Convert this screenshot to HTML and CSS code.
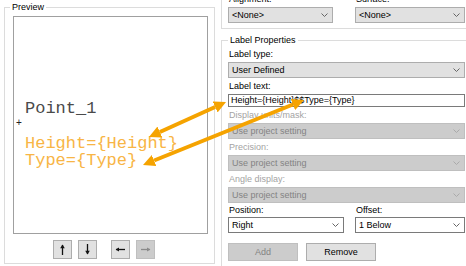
FILE: index.html
```html
<!DOCTYPE html>
<html lang="en">
<head>
    <meta charset="UTF-8">
    <title>Label Properties</title>
    <link rel="stylesheet" href="styles.css">
</head>
<body>
    <div class="page">
        <fieldset class="group preview">
            <legend>Preview</legend>
            <div class="canvas">
                <div class="label-name">Point_1</div>
                <div class="marker">+</div>
                <div class="label-text">Height={Height}</div>
                <div class="label-text">Type={Type}</div>
            </div>
            <div class="nudge">
                <button class="nudge-btn">
                    <svg width="17" height="17" viewBox="0 0 17 17"><path d="M8.5 4v10" stroke="#111" stroke-width="1.3"/><path d="M6.2 7.2L8.5 3.6l2.3 3.6z" fill="#111"/></svg>
                </button>
                <button class="nudge-btn">
                    <svg width="17" height="17" viewBox="0 0 17 17"><path d="M8.5 3v10" stroke="#111" stroke-width="1.3"/><path d="M6.2 9.8L8.5 13.4l2.3-3.6z" fill="#111"/></svg>
                </button>
                <button class="nudge-btn gap">
                    <svg width="17" height="17" viewBox="0 0 17 17"><path d="M4 8.5h9" stroke="#111" stroke-width="1.3"/><path d="M7 6.4L3.6 8.5 7 10.6z" fill="#111"/></svg>
                </button>
                <button class="nudge-btn" disabled>
                    <svg width="17" height="17" viewBox="0 0 17 17"><path d="M4 8.5h9" stroke="#8a8a8a" stroke-width="1.3"/><path d="M10 6.4l3.4 2.1L10 10.6z" fill="#8a8a8a"/></svg>
                </button>
            </div>
        </fieldset>

        <div class="side">
            <fieldset class="group placement">
                <div class="pair wide">
                    <div class="field">
                        <label>Alignment:</label>
                        <div class="combo">&lt;None&gt;<svg class="chev" width="7" height="4" viewBox="0 0 7 4"><path d="M0.5 0.5L3.5 3.5 6.5 0.5" fill="none" stroke="#666"/></svg></div>
                    </div>
                    <div class="field">
                        <label>Surface:</label>
                        <div class="combo">&lt;None&gt;<svg class="chev" width="7" height="4" viewBox="0 0 7 4"><path d="M0.5 0.5L3.5 3.5 6.5 0.5" fill="none" stroke="#666"/></svg></div>
                    </div>
                </div>
            </fieldset>

            <fieldset class="group props">
                <legend>Label Properties</legend>
                <label>Label type:</label>
                <div class="combo">User Defined<svg class="chev" width="7" height="4" viewBox="0 0 7 4"><path d="M0.5 0.5L3.5 3.5 6.5 0.5" fill="none" stroke="#666"/></svg></div>
                <label>Label text:</label>
                <div class="textbox">Height={Height}$$Type={Type}</div>
                <label class="off">Display units/mask:</label>
                <div class="combo off">Use project setting<svg class="chev" width="7" height="4" viewBox="0 0 7 4"><path d="M0.5 0.5L3.5 3.5 6.5 0.5" fill="none" stroke="#aaa"/></svg></div>
                <label class="off">Precision:</label>
                <div class="combo off">Use project setting<svg class="chev" width="7" height="4" viewBox="0 0 7 4"><path d="M0.5 0.5L3.5 3.5 6.5 0.5" fill="none" stroke="#aaa"/></svg></div>
                <label class="off">Angle display:</label>
                <div class="combo off">Use project setting<svg class="chev" width="7" height="4" viewBox="0 0 7 4"><path d="M0.5 0.5L3.5 3.5 6.5 0.5" fill="none" stroke="#aaa"/></svg></div>
                <div class="pair">
                    <div class="field">
                        <label class="short">Position:</label>
                        <div class="combo plain">Right<svg class="chev" width="7" height="4" viewBox="0 0 7 4"><path d="M0.5 0.5L3.5 3.5 6.5 0.5" fill="none" stroke="#666"/></svg></div>
                    </div>
                    <div class="field">
                        <label class="short">Offset:</label>
                        <div class="combo plain">1 Below<svg class="chev" width="7" height="4" viewBox="0 0 7 4"><path d="M0.5 0.5L3.5 3.5 6.5 0.5" fill="none" stroke="#666"/></svg></div>
                    </div>
                </div>
                <div class="actions">
                    <button class="btn" disabled>Add</button>
                    <button class="btn">Remove</button>
                </div>
            </fieldset>
        </div>

        <svg class="callouts" width="466" height="266" viewBox="0 0 466 266">
            <defs>
                <marker id="head" viewBox="0 0 10 10" refX="0" refY="5" markerWidth="3" markerHeight="3" orient="auto-start-reverse">
                    <path d="M0 0L10 5 0 10z" fill="#f5a300"/>
                </marker>
            </defs>
            <line x1="159.9" y1="132" x2="215.1" y2="107" stroke="#f5a300" stroke-width="4" marker-start="url(#head)" marker-end="url(#head)"/>
            <line x1="154.1" y1="160.5" x2="292.9" y2="104.5" stroke="#f5a300" stroke-width="4" marker-start="url(#head)" marker-end="url(#head)"/>
        </svg>
    </div>
</body>
</html>
```

FILE: styles.css
```css
body {
    margin: 0;
    width: 466px;
    height: 266px;
    overflow: hidden;
    background: #fff;
    font-family: 'Liberation Sans', Arial, sans-serif;
    font-size: 9px;
    color: #000;
}
.page {
    position: relative;
    display: flex;
    align-items: flex-start;
    gap: 6px;
    padding-left: 4px;
    height: 266px;
}
.group {
    margin: 0;
    border: 1px solid #dcdcdc;
    min-width: 0;
}
.group legend {
    padding: 0 2px;
    line-height: 14px;
}

/* preview */
.preview {
    width: 211px;
    flex-shrink: 0;
    box-sizing: border-box;
    padding: 2px 6px 4px 8px;
}
.preview legend {
    margin-left: -3px;
}
.canvas {
    height: 218px;
    box-sizing: border-box;
    border: 1px solid #a0a0a0;
    background: #fff;
    padding: 83px 0 0 2px;
    font-family: 'Liberation Mono', 'Courier New', monospace;
    font-size: 17px;
    line-height: 17px;
}
.label-name {
    margin-left: 9px;
    color: #4a4a4a;
}
.marker {
    height: 18px;
    font-family: 'Liberation Sans', Arial, sans-serif;
    font-size: 10px;
    line-height: 12px;
    color: #222;
}
.label-text {
    margin-left: 9px;
    color: #f8b545;
}
.nudge {
    display: flex;
    gap: 6px;
    margin-top: 6px;
    padding-left: 40px;
}
.nudge-btn {
    width: 19px;
    height: 19px;
    padding: 0;
    display: flex;
    align-items: center;
    justify-content: center;
    border: 1px solid #adadad;
    background: #e1e1e1;
}
.nudge-btn.gap {
    margin-left: 8px;
}
.nudge-btn:disabled {
    background: #cccccc;
    border-color: #bfbfbf;
}

/* right column */
.side {
    width: 251px;
    flex-shrink: 0;
}
.placement {
    margin-top: -20px;
    padding: 10px 6px 5px;
}
.props {
    margin-top: 5px;
    padding: 0 6px 10px;
}
.props legend {
    line-height: 12px;
}
label {
    display: block;
    line-height: 16px;
    padding-left: 1px;
}
label.off {
    color: #a3a3a3;
}
label.short {
    line-height: 14px;
}
.combo {
    height: 16px;
    box-sizing: border-box;
    display: flex;
    align-items: center;
    justify-content: space-between;
    padding: 0 4px 0 3px;
    border: 1px solid #adadad;
    background: #e1e1e1;
}
.combo.off {
    background: #cccccc;
    border-color: #bfbfbf;
    color: #838383;
}
.combo.plain {
    background: #fff;
    border-color: #7a7a7a;
}
.textbox {
    height: 13px;
    box-sizing: border-box;
    border: 1px solid #7a7a7a;
    background: #fff;
    padding-left: 2px;
    line-height: 11px;
}
.pair {
    display: grid;
    grid-template-columns: 116px 1fr;
    gap: 11px;
}
.pair.wide {
    grid-template-columns: 105px 1fr;
    gap: 22px;
}
.actions {
    display: flex;
    gap: 8px;
    margin-top: 10px;
}
.btn {
    width: 70px;
    height: 18px;
    padding: 0;
    font: inherit;
    border: 1px solid #adadad;
    background: #e1e1e1;
    color: #000;
}
.btn:disabled {
    background: #cccccc;
    border-color: #bfbfbf;
    color: #838383;
}

.callouts {
    position: absolute;
    left: 0;
    top: 0;
    pointer-events: none;
}
```
